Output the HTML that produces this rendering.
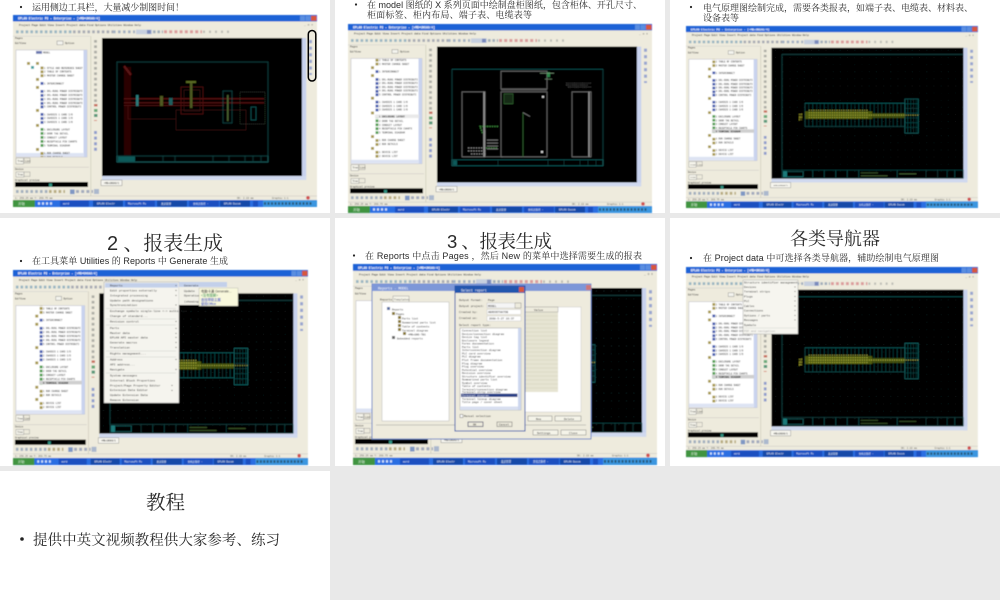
<!DOCTYPE html>
<html lang="zh"><head><meta charset="utf-8"><title>EPLAN</title>
<style>
html,body{margin:0;padding:0;width:1000px;height:600px;overflow:hidden;background:#e9e9e9}
svg{display:block}
.t{font-family:"Liberation Sans","Noto Serif CJK SC",serif;fill:#2a2a2a}
.m{font-family:"Liberation Mono",monospace;fill:#222}
.w{fill:#fff}
.g{fill:#555}
</style></head><body>
<svg width="1000" height="600" viewBox="0 0 1000 600" xmlns="http://www.w3.org/2000/svg">
<defs>
<filter id="bl" x="-2%" y="-2%" width="104%" height="104%"><feGaussianBlur stdDeviation="0.42"/></filter>
<filter id="bt" x="-2%" y="-2%" width="104%" height="104%"><feGaussianBlur stdDeviation="0.28"/></filter>
<pattern id="dots" width="7.5" height="7.5" patternUnits="userSpaceOnUse"><rect x="3" y="3" width=".6" height=".6" fill="#2a3e3e"/></pattern>
<clipPath id="tc"><rect x="3" y="35" width="68" height="107"/></clipPath>

<g id="tree">
<g fill="#a89a50">
<rect x="23" y="-1" width="6" height="2.8" fill="#6a78b0"/><rect x="14" y="10" width="3" height="2.8"/><rect x="18" y="14" width="3" height="2.8" fill="#40a0a0"/>
<rect x="23" y="10" width="3" height="2.8"/><rect x="23" y="26" width="3" height="2.8"/><rect x="23" y="34" width="3" height="2.8"/><rect x="23" y="57" width="3" height="2.8"/><rect x="23" y="72" width="3" height="2.8"/><rect x="23" y="96" width="3" height="2.8"/><rect x="23" y="108" width="3" height="2.8"/>
<rect x="27.5" y="14.5" width="3" height="2.8"/><rect x="27.5" y="18.4" width="3" height="2.8"/><rect x="27.5" y="22.3" width="3" height="2.8"/><rect x="27.5" y="100" width="3" height="2.8"/><rect x="27.5" y="104" width="3" height="2.8"/><rect x="27.5" y="112" width="3" height="2.8"/><rect x="27.5" y="116" width="3" height="2.8"/>
</g>
<g fill="#4a60b0"><rect x="27.5" y="30" width="3" height="2.8"/><rect x="27.5" y="38" width="3" height="2.8"/><rect x="27.5" y="42" width="3" height="2.8"/><rect x="27.5" y="46" width="3" height="2.8"/><rect x="27.5" y="50" width="3" height="2.8"/><rect x="27.5" y="53.5" width="3" height="2.8"/><rect x="27.5" y="61" width="3" height="2.8"/><rect x="27.5" y="65" width="3" height="2.8"/><rect x="27.5" y="69" width="3" height="2.8"/></g>
<g fill="#55a055"><rect x="27.5" y="76" width="3" height="2.8"/><rect x="27.5" y="80" width="3" height="2.8"/><rect x="27.5" y="84" width="3" height="2.8"/><rect x="27.5" y="88" width="3" height="2.8"/><rect x="27.5" y="92" width="3" height="2.8"/></g>
<g class="m" font-size="2.4">
<text x="30" y="1.5">MODEL</text>
<text x="31" y="16.8">1 STYLE AND REFERENCE SHEET</text><text x="31" y="20.7">2 TABLE OF CONTENTS</text><text x="31" y="24.6">3 MASTER CHARGE SHEET</text>
<text x="31" y="32.4">1 INTERCONNECT</text>
<text x="31" y="40.2">1 DOL-RUN1 POWER DISTRIBUTI</text><text x="31" y="44">2 DOL-RUN1 POWER DISTRIBUTI</text><text x="31" y="47.9">3 DOL-RUN1 POWER DISTRIBUTI</text><text x="31" y="51.8">4 DOL-RUN1 POWER DISTRIBUTI</text><text x="31" y="55.6">5 CONTROL POWER DISTRIBUTI</text>
<text x="31" y="63.3">1 CHASSIS 1 CARD I/O</text><text x="31" y="67.2">2 CHASSIS 1 CARD I/O</text><text x="31" y="71">3 CHASSIS 1 CARD I/O</text>
<text x="31" y="78.7">1 ENCLOSURE LAYOUT</text><text x="31" y="82.6">2 DOOR TAG DETAIL</text><text x="31" y="86.5">3 CONDUIT LAYOUT</text><text x="31" y="90.4">4 RECEPTACLE PIN CHARTS</text><text x="31" y="94.3">5 TERMINAL DIAGRAM</text>
<text x="31" y="102">1 RUN CHARGE SHEET</text><text x="31" y="106">2 RUN DETAILS</text>
<text x="31" y="114">1 DEVICE LIST</text><text x="31" y="118">2 DEVICE LIST</text>
</g>
</g>

<g id="win">
<rect width="304" height="192" fill="#eeebdd"/>
<rect width="304" height="6.5" fill="#1c62d6"/>
<text class="m w" font-size="3.2" font-weight="bold" x="5" y="4.6" textLength="82">EPLAN Electric P8 - Enterprise - [=MB+UH0A0/4]</text>
<rect x="287" y=".8" width="5" height="5" fill="#5a8ee0"/><rect x="292.5" y=".8" width="5" height="5" fill="#5a8ee0"/><rect x="298" y=".8" width="5.5" height="5" fill="#d8583a"/>
<text class="m" font-size="2.9" x="6" y="10.8" textLength="122">Project Page Edit View Insert Project data Find Options Utilities Window Help</text>
<text class="m g" font-size="3" x="291" y="10.5">_ o x</text>
<path d="M3 16.8H60" stroke="#9ab6c2" stroke-width="2.8" stroke-dasharray="2.6 2.2"/>
<path d="M60 16.8H100" stroke="#a8abb4" stroke-width="2.8" stroke-dasharray="2.6 2.2"/>
<path d="M100 16.8H122" stroke="#a3b0c2" stroke-width="2.8" stroke-dasharray="2.6 2.4"/>
<rect x="123" y="14.6" width="16" height="4.6" fill="#c6cfdf"/><rect x="134" y="15" width="4" height="3.8" fill="#7a8abc"/>
<path d="M140 16.8H150" stroke="#a0adba" stroke-width="2.8" stroke-dasharray="2.6 1.8"/>
<path d="M151 16.8H189" stroke="#dc9c9c" stroke-width="3" stroke-dasharray="3 2.2"/>
<path d="M190 16.8H217" stroke="#bdbdb6" stroke-width="2.4" stroke-dasharray="2 4"/>
<rect x="0" y="21" width="77" height=".5" fill="#ccc"/>
<text class="m" font-size="2.6" x="2" y="24">Pages</text>
<text class="m" font-size="2.6" x="2" y="29">Ed/View</text>
<rect x="44" y="26" width="6" height="3.8" fill="#f4f4ee" stroke="#777" stroke-width=".4"/>
<text class="m" font-size="2.6" x="52" y="29">Option</text>
<rect x="3" y="35" width="71" height="107" fill="#fff" stroke="#aab" stroke-width=".4"/>
<rect x="70.5" y="35" width="3.5" height="107" fill="#c9d3ee"/>
<rect x="3" y="138" width="68" height="3.5" fill="#dde3f3"/>
<rect x="3" y="143" width="7.5" height="6" fill="#f6f5ec" stroke="#888" stroke-width=".4"/><rect x="11" y="143" width="6" height="5" fill="#eeebdd" stroke="#888" stroke-width=".4"/>
<text class="m" font-size="2.3" x="4.5" y="147">Tree</text><text class="m" font-size="2.3" x="12" y="147">List</text>
<rect x="1" y="152" width="75" height=".4" fill="#bbb"/><text class="m" font-size="2.4" x="2" y="155">Device</text>
<rect x="3" y="157" width="8" height="5" fill="#f6f5ec" stroke="#888" stroke-width=".4"/><rect x="11" y="157" width="6" height="4.4" fill="#eeebdd" stroke="#888" stroke-width=".4"/>
<text class="m" font-size="2.3" x="4.5" y="160.5">Tree</text>
<text class="m" font-size="2.4" x="2" y="166">Graphical preview</text>
<rect x="2" y="167" width="73" height="5" fill="#000"/><rect x="36" y="168.5" width="3" height="3.5" fill="#2f8f7f"/>
<rect x="77.5" y="21" width=".6" height="160" fill="#c8c5b4"/>
<path d="M82.5 25V88" stroke="#adadA6" stroke-width="2.8" stroke-dasharray="2.6 2.8"/>
<rect x="81" y="89" width="3.5" height="2.4" fill="#c87060"/><rect x="81" y="94" width="3.5" height="3" fill="#6aaa7a"/><rect x="81" y="99" width="3.5" height="3" fill="#5a9a7a"/><rect x="81" y="105" width="3" height="1" fill="#d89080"/>
<path d="M82.5 116V136" stroke="#8f9ccc" stroke-width="2.8" stroke-dasharray="3 2.6"/>
<rect x="288.7" y="23" width="4.5" height="142" fill="#c8d2ee"/><rect x="89" y="161" width="204" height="4" fill="#d0d9ef"/>
<path d="M297.5 25V60" stroke="#99a6d0" stroke-width="3" stroke-dasharray="3.2 3.4"/>
<rect x="88" y="165" width="21" height="5.6" fill="#f7f6ef" stroke="#777" stroke-width=".4"/><text class="m" font-size="2.3" x="91" y="169">=MB+UH0A0/1</text>
<path d="M3 176.5H36" stroke="#a2afbe" stroke-width="3" stroke-dasharray="2.6 2.2"/>
<path d="M36 176.5H52" stroke="#b8ab80" stroke-width="3" stroke-dasharray="2.6 2.2"/>
<rect x="57" y="174.5" width="4.6" height="4.6" fill="#7e97c4"/><path d="M63 176.5H80" stroke="#a3aabd" stroke-width="3" stroke-dasharray="3 2.2"/><rect x="81" y="174" width="5" height="5" fill="#abb8cd"/>
<rect y="180.8" width="304" height=".4" fill="#bbb"/>
<text class="m g" font-size="2.5" x="2" y="184">1: 259.25 mm  Y: 269.75 mm</text>
<text class="m g" font-size="2.5" x="224" y="184">OK: 2.19 mm</text><text class="m g" font-size="2.5" x="259" y="184">Graphic 1:1</text>
<circle cx="295" cy="182.8" r="1.8" fill="#d05050"/>
<rect y="185" width="304" height="7" fill="#2b6ee2"/>
<rect width="22" y="185" height="7" fill="#3f9440"/><text class="t w" font-size="3.4" x="5" y="190">开始</text>
<path d="M25 188.5H40" stroke="#cfe0fa" stroke-width="2.4" stroke-dasharray="2 2"/>
<g fill="#1a50c0"><rect x="47" y="185.6" width="29" height="6"/><rect x="112" y="185.6" width="30" height="6"/><rect x="176" y="185.6" width="30" height="6"/></g>
<g fill="#174aa8"><rect x="80" y="185.6" width="30" height="6"/><rect x="144" y="185.6" width="30" height="6"/><rect x="207" y="185.6" width="30" height="6"/></g>
<g class="m w" font-size="2.5"><text x="50" y="189.6" fill="#fff">word</text><text x="84" y="189.6" fill="#fff">EPLAN Electr</text><text x="115" y="189.6" fill="#fff">Microsoft Po</text><text x="148" y="189.6" fill="#fff">发送管理</text><text x="180" y="189.6" fill="#fff">文档之路径 -</text><text x="211" y="189.6" fill="#fff">EPLAN Docum</text></g>
<rect x="240" y="186" width="5" height="5.5" fill="#1a50c0"/>
<rect x="250" y="185" width="54" height="7" fill="#3a96e0"/><path d="M251 188.5H300" stroke="#2a5a7a" stroke-width="2.6" stroke-dasharray="2 1.5"/>
</g>

<g id="term">
<rect x="89" y="23" width="200" height="138" fill="#000"/><rect x="89" y="23" width="200" height="138" fill="url(#dots)"/>
<path d="M100 30V152M100 30H289" stroke="#185a5a" stroke-width=".6" fill="none"/>
<rect x="100" y="152" width="189" height="8.5" fill="none" stroke="#185a5a" stroke-width=".5"/>
<rect x="101" y="153" width="4" height="6.5" fill="#1a7a7a"/>
<rect x="105" y="153.5" width="17" height="5.5" fill="none" stroke="#1f8888" stroke-width=".5"/>
<path d="M132 152V160M144 152V160M156 152V160M168 152V160M180 152V160M220 152V160M250 152V160M262 152V160M272 152V160M280 152V160" stroke="#185a5a" stroke-width=".5"/>
<path d="M182 155H200M182 158H210M222 156H240" stroke="#4f6f3a" stroke-width=".7"/>
<rect x="124" y="81.5" width="104" height="24.5" fill="none" stroke="#1a7272" stroke-width=".5"/>
<path d="M128 81.5V106M132 81.5V106M136 81.5V106M140 81.5V106M144 81.5V106M148 81.5V106M152 81.5V106M156 81.5V106M160 81.5V106M164 81.5V106M168 81.5V106M172 81.5V106M176 81.5V106M180 81.5V106M184 81.5V106M188 81.5V106M192 81.5V106M196 81.5V106M200 81.5V106M204 81.5V106M208 81.5V106M212 81.5V106M216 81.5V106M220 81.5V106M224 81.5V106" stroke="#176666" stroke-width=".4"/>
<rect x="228" y="77" width="14" height="36" fill="none" stroke="#1a7272" stroke-width=".6"/>
<path d="M228 82H242M228 87H242M228 92H242M228 97H242M228 102H242M228 107H242M231 77V113M234 77V113M237 77V113M240 77V113" stroke="#176666" stroke-width=".4"/>
<rect x="124" y="90" width="70" height="8" fill="#5d6a12" opacity=".85"/><rect x="194" y="92" width="34" height="5" fill="#4a5a14" opacity=".85"/>
<path d="M128 89H190M128 91.5H190M128 94H242M128 96.5H190" stroke="#c8c84a" stroke-width=".8" stroke-dasharray="1 1.4"/>
<text x="121" y="96" font-family="Liberation Sans,sans-serif" font-size="4.5" fill="#b8b83a" transform="rotate(-90 121 96)" text-anchor="middle">TB1</text>
</g>
</defs>

<!-- page frames -->
<rect width="1000" height="600" fill="#e9e9e9"/>
<g fill="#fff">
<rect width="330" height="213"/><rect x="335" width="330" height="213"/><rect x="670" width="330" height="213"/>
<rect y="218" width="330" height="248"/><rect x="335" y="218" width="330" height="248"/><rect x="670" y="218" width="330" height="248"/>
<rect y="471" width="330" height="129"/>
</g>

<g filter="url(#bl)">
<!-- S1 -->
<g transform="translate(13 15)">
<use href="#win"/>
<g clip-path="url(#tc)"><use href="#tree" y="37"/></g>
<rect x="89" y="23" width="200" height="138" fill="#000"/>
<rect x="104" y="47" width="151" height="100" fill="none" stroke="#185a5a" stroke-width=".6"/>
<rect x="104" y="141" width="151" height="6" fill="none" stroke="#1a6a6a" stroke-width=".5"/>
<rect x="105" y="141.5" width="17" height="5" fill="#0f5a5a"/>
<path d="M150 141V147M162 141V147M200 141V147M216 141V147M232 141V147M240 141V147M248 141V147" stroke="#185a5a" stroke-width=".5"/>
<rect x="111" y="52" width="7" height="88" fill="#2c0606"/><path d="M111 51L118 60" stroke="#5a1212" stroke-width="2.4"/>
<rect x="111" y="83" width="140" height="1.6" fill="#4e0e0e"/><rect x="111" y="87" width="140" height="1.6" fill="#480c0c"/><rect x="111" y="90" width="100" height="1" fill="#480c0c"/>
<rect x="168" y="72" width="22" height="27" fill="none" stroke="#5a1010" stroke-width=".7"/><rect x="171" y="75" width="16" height="21" fill="none" stroke="#4a0e0e" stroke-width=".5"/>
<rect x="163" y="95" width="70" height="20" fill="none" stroke="#4a0e0e" stroke-width=".6"/>
<path d="M115 90V104H163" stroke="#4a0e0e" stroke-width=".6" fill="none"/>
<rect x="123" y="80" width="2.6" height="11" fill="#2a7a7a"/><rect x="147" y="81" width="3" height="10" fill="#505a22"/><rect x="156" y="83" width="3.6" height="7" fill="#1d5f5f"/><rect x="177" y="66" width="2.4" height="27" fill="#4e5a20"/><rect x="173" y="66" width="10" height="2" fill="#5a6a20"/>
<rect x="210" y="76" width="9" height="32" fill="none" stroke="#186a6a" stroke-width=".5"/><rect x="214" y="80" width="1.6" height="26" fill="#48602e"/>
<rect x="227" y="77" width="25" height="32" fill="none" stroke="#506050" stroke-width=".4" stroke-dasharray="1.2 .8"/>
<rect x="238" y="92" width="5" height="13" fill="none" stroke="#1f8a8a" stroke-width=".5"/>
</g>
<!-- S2 -->
<g transform="translate(348 24) scale(1 .984)">
<use href="#win"/>
<g clip-path="url(#tc)"><use href="#tree" y="17"/><rect x="27" y="92" width="44" height="3.6" fill="#e9e9e9"/><text class="m" font-size="2.4" font-weight="bold" x="31" y="95">1 ENCLOSURE LAYOUT</text></g>
<rect x="89" y="23" width="200" height="138" fill="#000"/>
<rect x="104" y="46" width="151" height="98" fill="none" stroke="#185a5a" stroke-width=".6"/>
<rect x="104" y="138" width="151" height="6" fill="none" stroke="#1a6a6a" stroke-width=".5"/><rect x="105" y="138.5" width="4" height="5" fill="#0f5a5a"/>
<path d="M150 138V144M200 138V144M216 138V144M232 138V144M240 138V144M248 138V144" stroke="#185a5a" stroke-width=".5"/>
<g fill="none" stroke="#7c7c7c" stroke-width=".7">
<rect x="153" y="48" width="46" height="18"/><rect x="153" y="69" width="46" height="66"/><rect x="114" y="69" width="23" height="66"/><rect x="224" y="69" width="19" height="66"/>
</g>
<path d="M136 69V135M241 69V135" stroke="#999" stroke-width="1.4"/><path d="M153 67H199" stroke="#555" stroke-width="1.4"/>
<rect x="156" y="71" width="9" height="10" fill="#142c14" stroke="#3e7a3e" stroke-width=".5"/>
<path d="M175 90V135" stroke="#3e8a3e" stroke-width=".6"/><path d="M175 90L182 94" stroke="#888" stroke-width=".7"/>
<rect x="194" y="73" width="2" height="2" fill="#ddd"/><rect x="193" y="129" width="2" height="2" fill="#ddd"/>
<rect x="199" y="49" width="3" height="5" fill="#2a8a4a"/><path d="M192 50H206M197 56H204" stroke="#7a9a7a" stroke-width=".6"/>
<path d="M218 60H243M218 62H240M220 64H243" stroke="#555" stroke-width=".7" stroke-dasharray="1 .6"/>
<path d="M150 104H132L135 112M138 126H150" stroke="#3e8a3e" stroke-width="1.3" stroke-dasharray="1.4 1" fill="none"/>
<path d="M120 126H138M120 129H138M123 132H138" stroke="#999" stroke-width=".9" stroke-dasharray="1.4 1.2"/>
<path d="M137 108V135H155" stroke="#888" stroke-width=".5" fill="none"/><path d="M139 118H150M139 121H150M139 124H150M139 127H150" stroke="#777" stroke-width=".9"/>
</g>
<!-- S3 -->
<g transform="translate(686 26) scale(.96 .948)">
<use href="#win"/>
<g clip-path="url(#tc)"><use href="#tree" y="18"/><rect x="27" y="109" width="44" height="3.6" fill="#cfcfcf"/><text class="m" font-size="2.4" font-weight="bold" x="31" y="112.3">5 TERMINAL DIAGRAM</text></g>
<use href="#term"/>
</g>
<!-- S4 -->
<g transform="translate(13 270) scale(.97 1.016)">
<use href="#win"/>
<g clip-path="url(#tc)"><use href="#tree" y="18"/><rect x="27" y="109" width="44" height="3.6" fill="#cfcfcf"/><text class="m" font-size="2.4" font-weight="bold" x="31" y="112.3">5 TERMINAL DIAGRAM</text></g>
<use href="#term"/>
</g>
<!-- S4 menus -->
<rect x="104" y="282" width="75" height="121" fill="#f5f4ee" stroke="#999" stroke-width=".4"/>
<rect x="105" y="283" width="73" height="4.6" fill="#c3d0ea"/>
<rect x="179" y="282" width="48" height="23" fill="#f2f1e8"/><rect x="179" y="282" width="48" height="5" fill="#c3d0ea"/>
<g class="m" font-size="3">
<text x="110" y="286.5">Reports</text><text x="110" y="291.5">Edit properties externally</text><text x="110" y="296.5">Integrated processing</text><text x="110" y="301.5">Update path designations</text><text x="110" y="306">Synchronization</text>
<text x="110" y="312">Exchange symbols single-line &lt;-&gt; multi-line</text><text x="110" y="317">Change of standard...</text><text x="110" y="322.5">Revision control</text>
<text x="110" y="329">Parts</text><text x="110" y="334">Master data</text><text x="110" y="338.5">EPLAN API master data</text><text x="110" y="343.5">Generate macros</text><text x="110" y="348.5">Translation</text>
<text x="110" y="354.5">Rights management...</text><text x="110" y="360.5">Address</text><text x="110" y="365.5">API address...</text><text x="110" y="370.5">Navigate</text>
<text x="110" y="376.5">System messages</text><text x="110" y="381.5">Internal Block Properties</text><text x="110" y="386.5">Project/Page Property Editor</text><text x="110" y="391">Extension Data Editor</text><text x="110" y="396">Update Extension Data</text><text x="110" y="401">Remove Extension</text>
<text x="184" y="286.5">Generate</text><text x="184" y="292">Update</text><text x="184" y="296.5">Operation pages</text><text x="184" y="302.5">(showing)</text>
</g>
<path d="M106 308.5H176M106 319H176M106 325H176M106 351H176M106 357H176M106 373H176" stroke="#ccc" stroke-width=".5"/>
<path d="M176 285.2v.8M176 290v.8M176 295v.8M176 304.5v.8M176 321v.8M176 328v.8M176 333v.8M176 337v.8M176 342v.8M176 347v.8M176 359v.8M176 369v.8M172 385v.8M172 390v.8" stroke="#444" stroke-width="1.2"/>
<rect x="199" y="288" width="39" height="18" fill="#f8f8dc" stroke="#999" stroke-width=".3"/>
<g font-family="Liberation Sans,Noto Sans CJK SC,sans-serif" font-size="3.3"><text x="201" y="292.5" fill="#333">电脑卡通 Generate...</text><text x="201" y="296.5" fill="#2a8a4a">&lt;没有图解&gt;</text><text x="201" y="301" fill="#2233bb">查找帮助主题</text><text x="201" y="305" fill="#2233bb">使用Office</text></g>
<!-- S5 -->
<g transform="translate(353 264) scale(1 1.047)">
<use href="#win"/>
<use href="#term"/>
</g>
<rect x="372" y="284" width="219" height="155" fill="#eeebdd" stroke="#6a86c8" stroke-width="1"/>
<rect x="372" y="284" width="219" height="7" fill="#7d97d8"/><text class="m w" font-size="3.4" x="378" y="289.5">Reports - MODEL</text>
<rect x="586" y="285" width="5" height="5" fill="#c77"/>
<text class="m" font-size="2.9" x="380" y="300.5">Reports</text><rect x="393" y="296" width="16" height="6" fill="#f5f4e9" stroke="#888" stroke-width=".4"/><text class="m g" font-size="2.9" x="394" y="300.5">Templates</text>
<rect x="382" y="302" width="67" height="119" fill="#fff" stroke="#aaa" stroke-width=".4"/>
<g class="m" font-size="2.7">
<text x="392" y="310.5">Reports</text><text x="396" y="315">Pages</text><text x="402" y="319.3">Parts list</text><text x="402" y="323.3">Summarized parts list</text><text x="402" y="327.3">Table of contents</text><text x="402" y="331.3">Terminal diagram</text><text x="408" y="335.3">=MB+UH0-TB1</text><text x="397" y="339.5">Embedded reports</text>
</g>
<g fill="#8a7a30"><rect x="387" y="307" width="3" height="3" fill="#5a70a0"/><rect x="392" y="312" width="3" height="3"/><rect x="398" y="316" width="3" height="3"/><rect x="398" y="320" width="3" height="3"/><rect x="398" y="324" width="3" height="3"/><rect x="398" y="328" width="3" height="3"/><rect x="403" y="332" width="3" height="3"/><rect x="392" y="336" width="3" height="3" fill="#666"/></g>
<rect x="525" y="307" width="56" height="105" fill="#fff" stroke="#aaa" stroke-width=".3"/>
<rect x="523" y="307" width="35" height="85" fill="#e6e4d2"/>
<rect x="523" y="307" width="35" height="5" fill="#eeebdd" stroke="#777" stroke-width=".3"/><text class="m" font-size="3" x="534" y="311">Value</text>
<path d="M525 316H558M525 320H558M525 324H558M525 328H558M525 332H558M525 336H558M525 340H558M525 344H558M525 348H558M525 352H558M525 356H558M525 360H558M525 364H558M525 368H558M525 372H558M525 376H558M525 380H558M525 384H558M525 388H558" stroke="#cfcdb8" stroke-width=".4"/>
<path d="M376 425H586" stroke="#999" stroke-width=".5"/>
<rect x="528" y="416" width="24" height="5" fill="#f5f4e9" stroke="#666" stroke-width=".4"/><rect x="555" y="416" width="26" height="5" fill="#f5f4e9" stroke="#666" stroke-width=".4"/>
<rect x="533" y="430" width="25" height="5" fill="#f5f4e9" stroke="#666" stroke-width=".4"/><rect x="561" y="430" width="25" height="5" fill="#f5f4e9" stroke="#666" stroke-width=".4"/>
<g class="m" font-size="2.8"><text x="536" y="420">New</text><text x="564" y="420">Delete</text><text x="537" y="434">Settings</text><text x="569" y="434">Close</text></g>
<rect x="455" y="286" width="70" height="145" fill="#eeebdd" stroke="#2456ae" stroke-width="1"/>
<rect x="455" y="286" width="70" height="7" fill="#2456ae"/><text class="m w" font-size="3.3" x="461" y="291.7">Select report</text>
<rect x="519" y="287" width="5" height="5" fill="#d8583a"/>
<rect x="487" y="303" width="34" height="5" fill="#f5f5f5" stroke="#aaa" stroke-width=".3"/><rect x="515" y="303" width="6" height="5" fill="#eeebdd" stroke="#666" stroke-width=".3"/>
<rect x="487" y="309.5" width="34" height="5" fill="#fff" stroke="#aaa" stroke-width=".3"/><rect x="487" y="316" width="34" height="5" fill="#fff" stroke="#aaa" stroke-width=".3"/>
<g class="m" font-size="2.8"><text x="459" y="301">Output format:</text><text x="488" y="301">Page</text><text x="459" y="307">Output project:</text><text x="488" y="307">MODEL</text><text x="459" y="313">Created by:</text><text x="459" y="319">Created on:</text><text x="459" y="326">Select report type:</text><text x="488" y="313">ABROOOTHATOB</text><text x="489" y="319.5">2008-5-27 16:37</text></g>
<rect x="460" y="328" width="61" height="82" fill="#fff" stroke="#888" stroke-width=".4"/>
<rect x="518" y="328" width="3" height="82" fill="#ccd6ee"/><rect x="460" y="406.5" width="58" height="3.5" fill="#d8dff0"/>
<rect x="461" y="393.6" width="56.5" height="3.4" fill="#2a3f86"/>
<g class="m" font-size="2.8">
<text x="462" y="331.5">Connection list</text><text x="462" y="334.8">Device/connection diagram</text><text x="462" y="338">Device tag list</text><text x="462" y="341.3">Enclosure legend</text><text x="462" y="344.6">Forms documentation</text><text x="462" y="347.9">Parts list</text><text x="462" y="351.2">Interconnection diagram</text><text x="462" y="354.4">PLC card overview</text><text x="462" y="357.7">PLC diagram</text><text x="462" y="361">Plot frame documentation</text><text x="462" y="364.3">Plug diagram</text><text x="462" y="367.5">Plug overview</text><text x="462" y="370.8">Potential overview</text><text x="462" y="374.1">Revision overview</text><text x="462" y="377.4">Structure identifier overview</text><text x="462" y="380.6">Summarized parts list</text><text x="462" y="383.9">Symbol overview</text><text x="462" y="387.2">Table of contents</text><text x="462" y="390.5">Terminal/connection diagram</text><text x="462" y="393.2">Terminal-strip overview</text><text class="w" x="462" y="396.4" style="font-family:'Liberation Mono',monospace">Terminal diagram</text><text x="462" y="399.8">Terminal lineup diagram</text><text x="462" y="403">Title page / cover sheet</text>
<text x="464" y="417">Manual selection</text><text x="473" y="425.5">OK</text><text x="499" y="425.5">Cancel</text></g>
<rect x="460" y="414.5" width="3" height="3" fill="#fff" stroke="#555" stroke-width=".4"/>
<rect x="468" y="422" width="15" height="4.5" fill="none" stroke="#335" stroke-width=".6"/><rect x="497" y="422" width="15" height="4.5" fill="none" stroke="#666" stroke-width=".5"/>
<!-- S6 -->
<g transform="translate(686 267) scale(.96 .99)">
<use href="#win"/>
<g clip-path="url(#tc)"><use href="#tree" y="18"/><rect x="27" y="109" width="44" height="3.6" fill="#cfcfcf"/><text class="m" font-size="2.4" font-weight="bold" x="31" y="112.3">5 TERMINAL DIAGRAM</text></g>
<use href="#term"/>
</g>
<rect x="743" y="280" width="55" height="54" fill="#f6f5ef" stroke="#999" stroke-width=".4"/>
<g class="m" font-size="2.9"><text x="744" y="283.5">Structure identifier management...</text><text x="744" y="288">Devices</text><text x="744" y="292.5">Terminal strips</text><text x="744" y="297.5">Plugs</text><text x="744" y="302">PLC</text><text x="744" y="307">Cables</text><text x="744" y="311.5">Connections</text><text x="744" y="316.5">Options / parts</text><text x="744" y="321">Messages</text><text x="744" y="326">Symbols</text><text x="744" y="332" style="fill:#aaa">PDF and navigation</text></g>
<path d="M744 328H796" stroke="#ccc" stroke-width=".4"/>
<path d="M795 286.5v.8M795 291v.8M795 296v.8M795 300.5v.8M795 305.5v.8M795 310v.8M795 315v.8M795 319.5v.8" stroke="#444" stroke-width="1.1"/>
</g>

<!-- S1 annotation -->
<rect x="308.3" y="30.5" width="7.5" height="50.5" rx="3.7" fill="none" stroke="#000" stroke-width="1.5"/>

<!-- slide text -->
<g filter="url(#bt)">
<circle cx="21" cy="7" r="1.1" fill="#222"/>
<text class="t" font-size="9" x="32" y="10.5" textLength="152">运用侧边工具栏，大量减少制图时间！</text>
<circle cx="356" cy="4.5" r="1.1" fill="#222"/>
<text class="t" font-size="9" x="367" y="8" textLength="275">在 model 图纸的 X 系列页面中绘制盘柜图纸，包含柜体、开孔尺寸、</text>
<text class="t" font-size="9" x="367" y="18" textLength="165">柜面标签、柜内布局、端子表、电缆表等</text>
<circle cx="691" cy="7" r="1.1" fill="#222"/>
<text class="t" font-size="9" x="703" y="11" textLength="270">电气原理图绘制完成，需要各类报表，如端子表、电缆表、材料表、</text>
<text class="t" font-size="9" x="703" y="21" textLength="36">设备表等</text>
<text class="t" font-size="20" x="107" y="250" textLength="116">2 、报表生成</text>
<circle cx="21" cy="261" r="1.1" fill="#222"/>
<text class="t" font-size="9" x="32" y="264" textLength="196">在工具菜单 Utilities 的 Reports 中 Generate 生成</text>
<text class="t" font-size="18.5" x="447" y="248" textLength="105">3 、报表生成</text>
<circle cx="354" cy="255.5" r="1.1" fill="#222"/>
<text class="t" font-size="9" x="365" y="259" textLength="277">在 Reports 中点击 Pages ，然后 New 的菜单中选择需要生成的报表</text>
<text class="t" font-size="18" x="790" y="245" textLength="90">各类导航器</text>
<circle cx="691" cy="258" r="1.1" fill="#222"/>
<text class="t" font-size="9" x="703" y="261" textLength="236">在 Project data 中可选择各类导航器，辅助绘制电气原理图</text>
<text class="t" font-size="19.5" x="146" y="509" textLength="39">教程</text>
<circle cx="22" cy="539" r="1.8" fill="#222"/>
<text class="t" font-size="14.5" x="33" y="545" textLength="247">提供中英文视频教程供大家参考、练习</text>
</g>
</svg>
</body></html>
